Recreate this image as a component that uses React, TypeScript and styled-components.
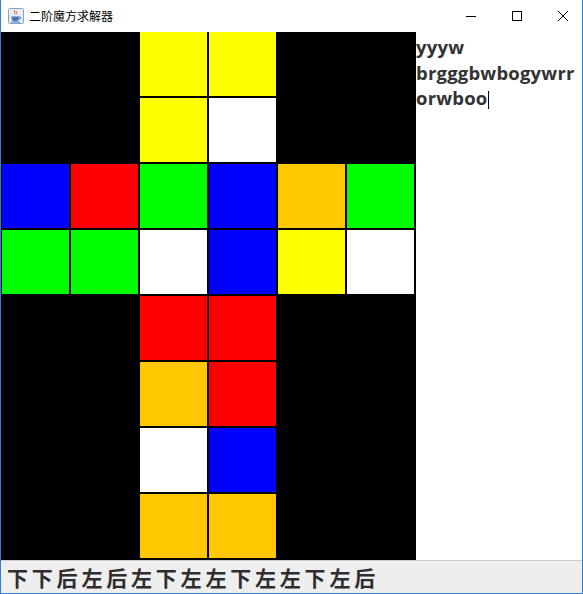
import React from "react";
import styled, { createGlobalStyle } from "styled-components";

const GlobalStyle = createGlobalStyle`
  html, body { margin: 0; padding: 0; background: #ffffff; }
  #root { width: 583px; height: 594px; }
`;

const Window = styled.div`
  width: 583px;
  height: 594px;
  box-sizing: border-box;
  border-left: 1px solid #2f7fd4;
  border-right: 1px solid #2f7fd4;
  border-bottom: 1px solid #2f7fd4;
  display: flex;
  flex-direction: column;
  background: #ffffff;
  overflow: hidden;
`;

const TitleBar = styled.div`
  height: 32px;
  flex: 0 0 32px;
  display: flex;
  align-items: center;
  background: #ffffff;
  font-family: "Noto Sans CJK SC", "Noto Sans", sans-serif;
  font-size: 12px;
  color: #000000;
`;

const AppIcon = styled.svg`
  width: 16px;
  height: 16px;
  margin-left: 7px;
  margin-right: 5px;
  flex: 0 0 16px;
`;

const Title = styled.span`
  flex: 1;
  line-height: 16px;
  margin-top: -1px;
`;

const CaptionButton = styled.div`
  width: 46px;
  height: 32px;
  box-sizing: border-box;
  padding-left: 8px;
  display: flex;
  align-items: center;
  justify-content: center;
`;

const Body = styled.div`
  display: flex;
  height: 528px;
  flex: 0 0 528px;
`;

const Board = styled.div`
  width: 415px;
  flex: 0 0 415px;
  box-sizing: border-box;
  background: #000000;
  padding: 0 2px 2px 1px;
  display: grid;
  grid-template-columns: repeat(6, 67px);
  grid-template-rows: repeat(8, 64px);
  gap: 2px;
`;

const Cell = styled.div<{ $c: string }>`
  background: ${(p) => p.$c};
`;

const TextArea = styled.div`
  flex: 1;
  background: #ffffff;
  padding: 2px 0 0 0;
  font-family: "Open Sans", "Noto Sans", sans-serif;
  font-weight: 700;
  font-size: 18.5px;
  line-height: 25.5px;
  color: #333333;
  white-space: pre;
  letter-spacing: 0.2px;
`;

const Caret = styled.span`
  display: inline-block;
  width: 1px;
  height: 18px;
  background: #000000;
  vertical-align: -4px;
`;

const StatusBar = styled.div`
  flex: 1;
  box-sizing: border-box;
  background: #eeeeee;
  border-top: 1px solid #c9ced4;
  display: flex;
  align-items: center;
  padding-left: 6px;
  font-family: "Noto Sans CJK SC", sans-serif;
  font-weight: 700;
  font-size: 21px;
  letter-spacing: 3.8px;
  color: #2e2e2e;
  padding-bottom: 1px;
`;

const COLORS: Record<string, string> = {
  K: "#000000",
  Y: "#ffff00",
  W: "#ffffff",
  B: "#0000ff",
  R: "#ff0000",
  G: "#00ff00",
  O: "#ffc800",
};

const LAYOUT = [
  "KKYYKK",
  "KKYWKK",
  "BRGBOG",
  "GGWBYW",
  "KKRRKK",
  "KKORKK",
  "KKWBKK",
  "KKOOKK",
];

export default function App() {
  return (
    <>
      <GlobalStyle />
      <Window>
        <TitleBar>
          <AppIcon viewBox="0 0 16 16">
            <rect x="0.5" y="0.5" width="15" height="15" rx="1" fill="#e8eef6" stroke="#8aa2c0" />
            <path d="M7 2c-1.5 1.5 1 2.5-0.5 4.5M9 3c-1 1 0.8 1.8-0.3 3.2" stroke="#e06a1a" strokeWidth="1" fill="none" />
            <path d="M3.5 8.5h7.5v1.8c0 1.8-1.6 3-3.7 3s-3.8-1.2-3.8-3z" fill="#4a76b0" />
            <path d="M11 9h1.2c1 0 1 2-0.4 2H10.6" stroke="#4a76b0" strokeWidth="1" fill="none" />
            <rect x="3" y="13.5" width="9" height="1" fill="#4a76b0" />
          </AppIcon>
          <Title>二阶魔方求解器</Title>
          <CaptionButton>
            <svg width="10" height="10" viewBox="0 0 10 10">
              <line x1="0" y1="5.5" x2="10" y2="5.5" stroke="#000" strokeWidth="1" />
            </svg>
          </CaptionButton>
          <CaptionButton>
            <svg width="10" height="10" viewBox="0 0 10 10">
              <rect x="0.5" y="0.5" width="9" height="9" stroke="#000" strokeWidth="1" fill="none" />
            </svg>
          </CaptionButton>
          <CaptionButton>
            <svg width="10" height="10" viewBox="0 0 10 10">
              <path d="M0 0L10 10M10 0L0 10" stroke="#000" strokeWidth="1" />
            </svg>
          </CaptionButton>
        </TitleBar>
        <Body>
          <Board>
            {LAYOUT.flatMap((row, r) =>
              row.split("").map((c, i) => <Cell key={`${r}-${i}`} $c={COLORS[c]} />)
            )}
          </Board>
          <TextArea>
            {"yyyw\nbrgggbwbogywrr\norwboo"}
            <Caret />
          </TextArea>
        </Body>
        <StatusBar>下下后左后左下左左下左左下左后</StatusBar>
      </Window>
    </>
  );
}
